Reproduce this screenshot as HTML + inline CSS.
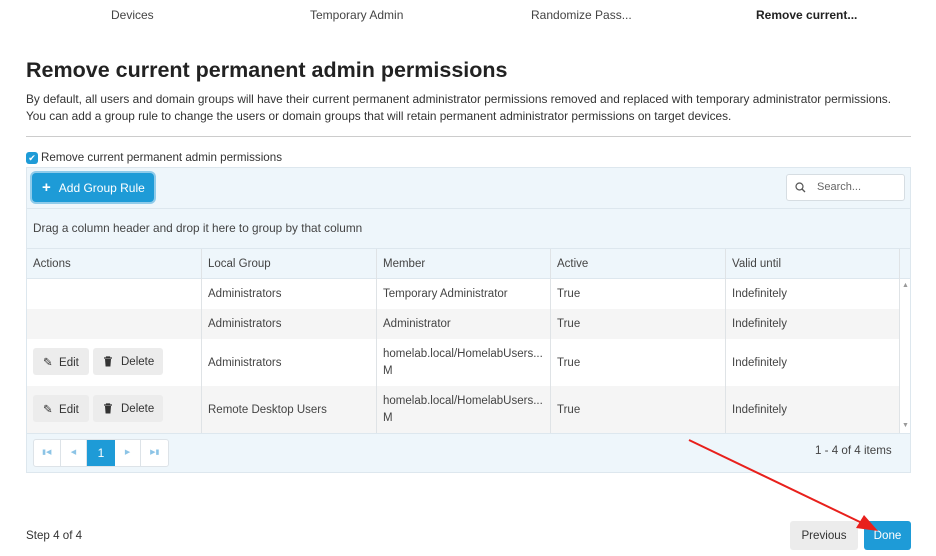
<!DOCTYPE html>
<html><head><style>
*{box-sizing:border-box;margin:0;padding:0}
body{width:936px;height:556px;background:#fff;font-family:"Liberation Sans",sans-serif;color:#333;font-size:12px;position:relative;overflow:hidden}
.abs{position:absolute}
.tab{position:absolute;top:8px;font-size:12px;color:#444}
h1{position:absolute;left:26px;top:58px;font-size:21.5px;font-weight:bold;color:#222}
.desc{position:absolute;left:26px;top:91px;font-size:11.85px;line-height:17px;color:#333}
.grid{position:absolute;left:26px;top:167px;width:885px;height:306px;border:1px solid #dde7ee;background:#eef6fb}
.cell{position:absolute;border-right:1px solid #dfe3e6;padding-left:6px;display:flex;align-items:center;font-size:11.5px;color:#444}
.btn{position:absolute;height:27px;background:#ececec;border-radius:3px;font-size:11.5px;color:#333;display:flex;align-items:center;padding-left:10px}
</style></head><body>
<div class="tab" style="left:111px">Devices</div>
<div class="tab" style="left:310px">Temporary Admin</div>
<div class="tab" style="left:531px">Randomize Pass...</div>
<div class="tab" style="left:756px;font-weight:bold;color:#222">Remove current...</div>
<h1>Remove current permanent admin permissions</h1>
<div class="desc">By default, all users and domain groups will have their current permanent administrator permissions removed and replaced with temporary administrator permissions.<br>You can add a group rule to change the users or domain groups that will retain permanent administrator permissions on target devices.</div>
<div class="abs" style="left:26px;top:136px;width:885px;height:1px;background:#ccc"></div>
<div class="abs" style="left:26px;top:152px;width:12px;height:12px;background:#1e9bd7;border-radius:3px;color:#fff;font-size:9px;line-height:12px;text-align:center">✔</div>
<div class="abs" style="left:41px;top:151px;font-size:11.6px;color:#333">Remove current permanent admin permissions</div>
<div class="grid"></div>
<div class="abs" style="left:32px;top:173px;width:122px;height:29px;background:#1e9bd7;border-radius:4px;box-shadow:0 0 0 2px #8fcbea;color:#fff;font-size:12px;display:flex;align-items:center;padding-left:10px"><b style="font-size:15px;margin-right:8px">+</b>Add Group Rule</div>
<div class="abs" style="left:786px;top:174px;width:119px;height:27px;background:#fff;border:1px solid #d6dde2;border-radius:3px;font-size:11px;color:#666;padding-left:30px;line-height:25px">Search...
<svg style="position:absolute;left:8px;top:7px" width="11" height="11" viewBox="0 0 11 11"><circle cx="4.5" cy="4.5" r="3.5" fill="none" stroke="#555" stroke-width="1.2"/><path d="M7 7l3 3" stroke="#555" stroke-width="1.3"/></svg></div>
<div class="abs" style="left:27px;top:208px;width:883px;height:1px;background:#dde7ee"></div>
<div class="abs" style="left:33px;top:221px;font-size:11.8px;color:#444">Drag a column header and drop it here to group by that column</div>
<div class="abs" style="left:27px;top:248px;width:883px;height:31px;background:#eef6fb;border-top:1px solid #dde7ee;border-bottom:1px solid #dde7ee"></div>
<div class="abs" style="left:27px;top:279px;width:873px;height:154px;background:#fff"></div>
<div class="abs" style="left:27px;top:309px;width:873px;height:30px;background:#f5f5f5"></div>
<div class="abs" style="left:27px;top:386px;width:873px;height:47px;background:#f5f5f5"></div>
<div class="abs" style="left:900px;top:279px;width:10px;height:154px;background:#fff"></div>
<div class="abs" style="left:902px;top:282px;font-size:7px;color:#999">▲</div>
<div class="abs" style="left:902px;top:422px;font-size:7px;color:#999">▼</div>
<div class="abs" style="left:27px;top:433px;width:883px;height:1px;background:#dde7ee"></div>

<div class="cell" style="left:27px;top:249px;width:175px;height:30px">Actions</div>
<div class="cell" style="left:202px;top:249px;width:175px;height:30px">Local Group</div>
<div class="cell" style="left:377px;top:249px;width:174px;height:30px">Member</div>
<div class="cell" style="left:551px;top:249px;width:175px;height:30px">Active</div>
<div class="cell" style="left:726px;top:249px;width:174px;height:30px">Valid until</div>
<div class="cell" style="left:27px;top:279px;width:175px;height:154px"></div>
<div class="cell" style="left:202px;top:279px;width:175px;height:30px">Administrators</div>
<div class="cell" style="left:377px;top:279px;width:174px;height:30px">Temporary Administrator</div>
<div class="cell" style="left:551px;top:279px;width:175px;height:30px">True</div>
<div class="cell" style="left:726px;top:279px;width:174px;height:30px">Indefinitely</div>
<div class="cell" style="left:202px;top:309px;width:175px;height:30px">Administrators</div>
<div class="cell" style="left:377px;top:309px;width:174px;height:30px">Administrator</div>
<div class="cell" style="left:551px;top:309px;width:175px;height:30px">True</div>
<div class="cell" style="left:726px;top:309px;width:174px;height:30px">Indefinitely</div>
<div class="cell" style="left:202px;top:339px;width:175px;height:47px">Administrators</div>
<div class="cell" style="left:377px;top:339px;width:174px;height:47px;line-height:17px">homelab.local/HomelabUsers...<br>M</div>
<div class="cell" style="left:551px;top:339px;width:175px;height:47px">True</div>
<div class="cell" style="left:726px;top:339px;width:174px;height:47px">Indefinitely</div>
<div class="cell" style="left:202px;top:386px;width:175px;height:47px">Remote Desktop Users</div>
<div class="cell" style="left:377px;top:386px;width:174px;height:47px;line-height:17px">homelab.local/HomelabUsers...<br>M</div>
<div class="cell" style="left:551px;top:386px;width:175px;height:47px">True</div>
<div class="cell" style="left:726px;top:386px;width:174px;height:47px">Indefinitely</div>
<div class="btn" style="left:33px;top:348px;width:56px">✎&nbsp; Edit</div>
<div class="btn" style="left:93px;top:348px;width:70px"><svg width="10" height="11" viewBox="0 0 10 11" style="margin-right:8px"><path d="M1 2h8M3.5 2V1h3v1" stroke="#333" stroke-width="1.2" fill="none"/><path d="M2 3h6l-.6 7.5H2.6z" fill="#333"/></svg>Delete</div>
<div class="btn" style="left:33px;top:395px;width:56px">✎&nbsp; Edit</div>
<div class="btn" style="left:93px;top:395px;width:70px"><svg width="10" height="11" viewBox="0 0 10 11" style="margin-right:8px"><path d="M1 2h8M3.5 2V1h3v1" stroke="#333" stroke-width="1.2" fill="none"/><path d="M2 3h6l-.6 7.5H2.6z" fill="#333"/></svg>Delete</div>
<div class="abs" style="left:33px;top:439px;width:136px;height:28px;background:#fff;border:1px solid #dde3e8;border-radius:3px;display:flex;font-size:7px;color:#8cc4e6">
<div style="width:27px;border-right:1px solid #dde3e8;text-align:center;line-height:26px">▮◀</div>
<div style="width:27px;border-right:1px solid #dde3e8;text-align:center;line-height:26px">◀</div>
<div style="width:28px;background:#1e9bd7;color:#fff;font-size:12px;text-align:center;line-height:26px">1</div>
<div style="width:27px;border-right:1px solid #dde3e8;text-align:center;line-height:26px">▶</div>
<div style="width:27px;text-align:center;line-height:26px">▶▮</div></div>
<div class="abs" style="left:815px;top:444px;font-size:11.6px;color:#444">1 - 4 of 4 items</div>
<div class="abs" style="left:26px;top:529px;font-size:11.6px;color:#333">Step 4 of 4</div>
<div class="abs" style="left:790px;top:521px;width:68px;height:29px;background:#ececec;border-radius:3px;font-size:11.6px;line-height:29px;text-align:center;color:#333">Previous</div>
<div class="abs" style="left:864px;top:521px;width:47px;height:29px;background:#1e9bd7;border-radius:3px;font-size:11.6px;line-height:29px;text-align:center;color:#fff">Done</div>
<svg class="abs" style="left:0;top:0" width="936" height="556"><line x1="689" y1="440" x2="862" y2="523" stroke="#e8201c" stroke-width="2"/><polygon points="878,531 856,528 864,515" fill="#e8201c"/></svg>
</body></html>
